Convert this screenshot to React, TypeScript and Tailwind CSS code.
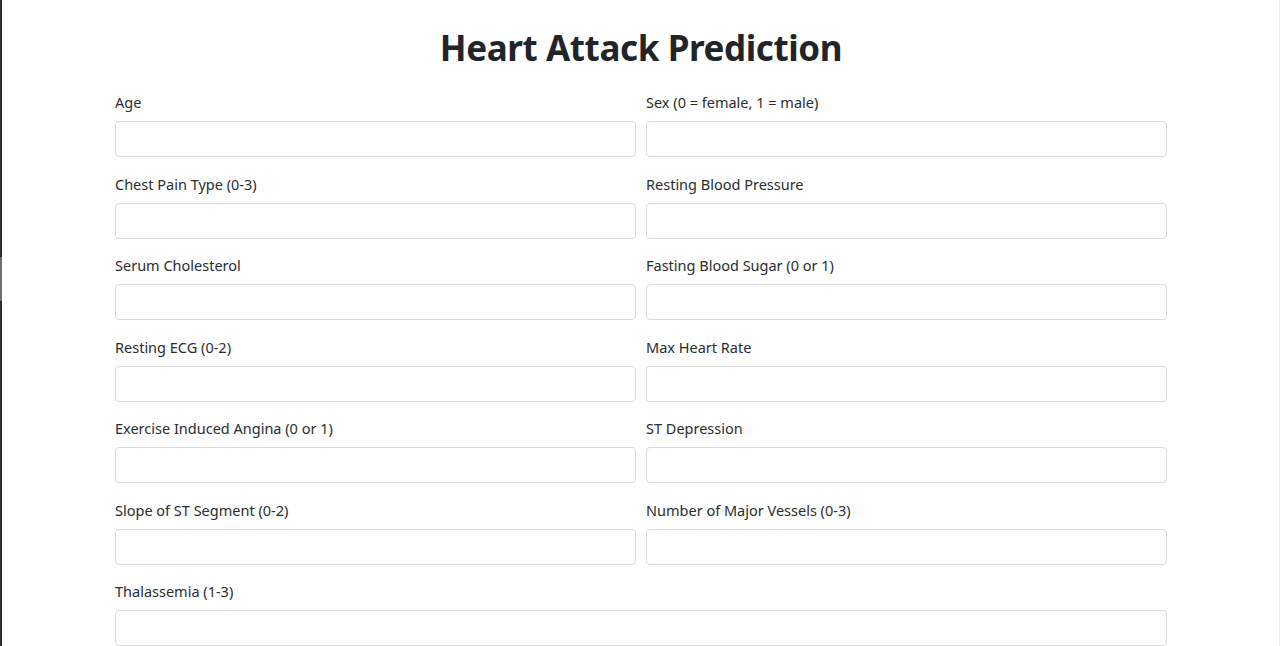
const fields: { label: string; full?: boolean }[] = [
  { label: 'Age' },
  { label: 'Sex (0 = female, 1 = male)' },
  { label: 'Chest Pain Type (0-3)' },
  { label: 'Resting Blood Pressure' },
  { label: 'Serum Cholesterol' },
  { label: 'Fasting Blood Sugar (0 or 1)' },
  { label: 'Resting ECG (0-2)' },
  { label: 'Max Heart Rate' },
  { label: 'Exercise Induced Angina (0 or 1)' },
  { label: 'ST Depression' },
  { label: 'Slope of ST Segment (0-2)' },
  { label: 'Number of Major Vessels (0-3)' },
  { label: 'Thalassemia (1-3)', full: true },
];

const App = () => {
  return (
    <div className="flex h-[646px] overflow-hidden bg-white text-[#212529] font-['Noto_Sans','Liberation_Sans',sans-serif]">
      {/* window edge on the left */}
      <div className="flex w-[2px] flex-col bg-[#2b2b2b]">
        <div className="h-[257px]" />
        <div className="h-[44px] bg-[#6e6e6e]" />
      </div>

      <div className="flex-1 border-r border-[#ececec]">
        <div className="ml-[113px] w-[1052px]">
          <h1 className="pt-[25px] pb-[20px] text-center text-[35px] font-bold leading-[46px] tracking-[-0.4px]">
            Heart Attack Prediction
          </h1>

          <form className="grid grid-cols-2 gap-x-[10px]">
            {fields.map((f) => (
              <div key={f.label} className={f.full ? 'col-span-2 mb-[15.5px]' : 'mb-[15.5px]'}>
                <label className="mb-[7px] block text-[14.5px] leading-[23px] text-[#2a2d31]">{f.label}</label>
                <input
                  type="text"
                  className="block h-[36px] w-full rounded-[4px] border border-[#d9dcdf] bg-white px-3 outline-none"
                />
              </div>
            ))}
          </form>
        </div>
      </div>
    </div>
  );
};

export default App;
